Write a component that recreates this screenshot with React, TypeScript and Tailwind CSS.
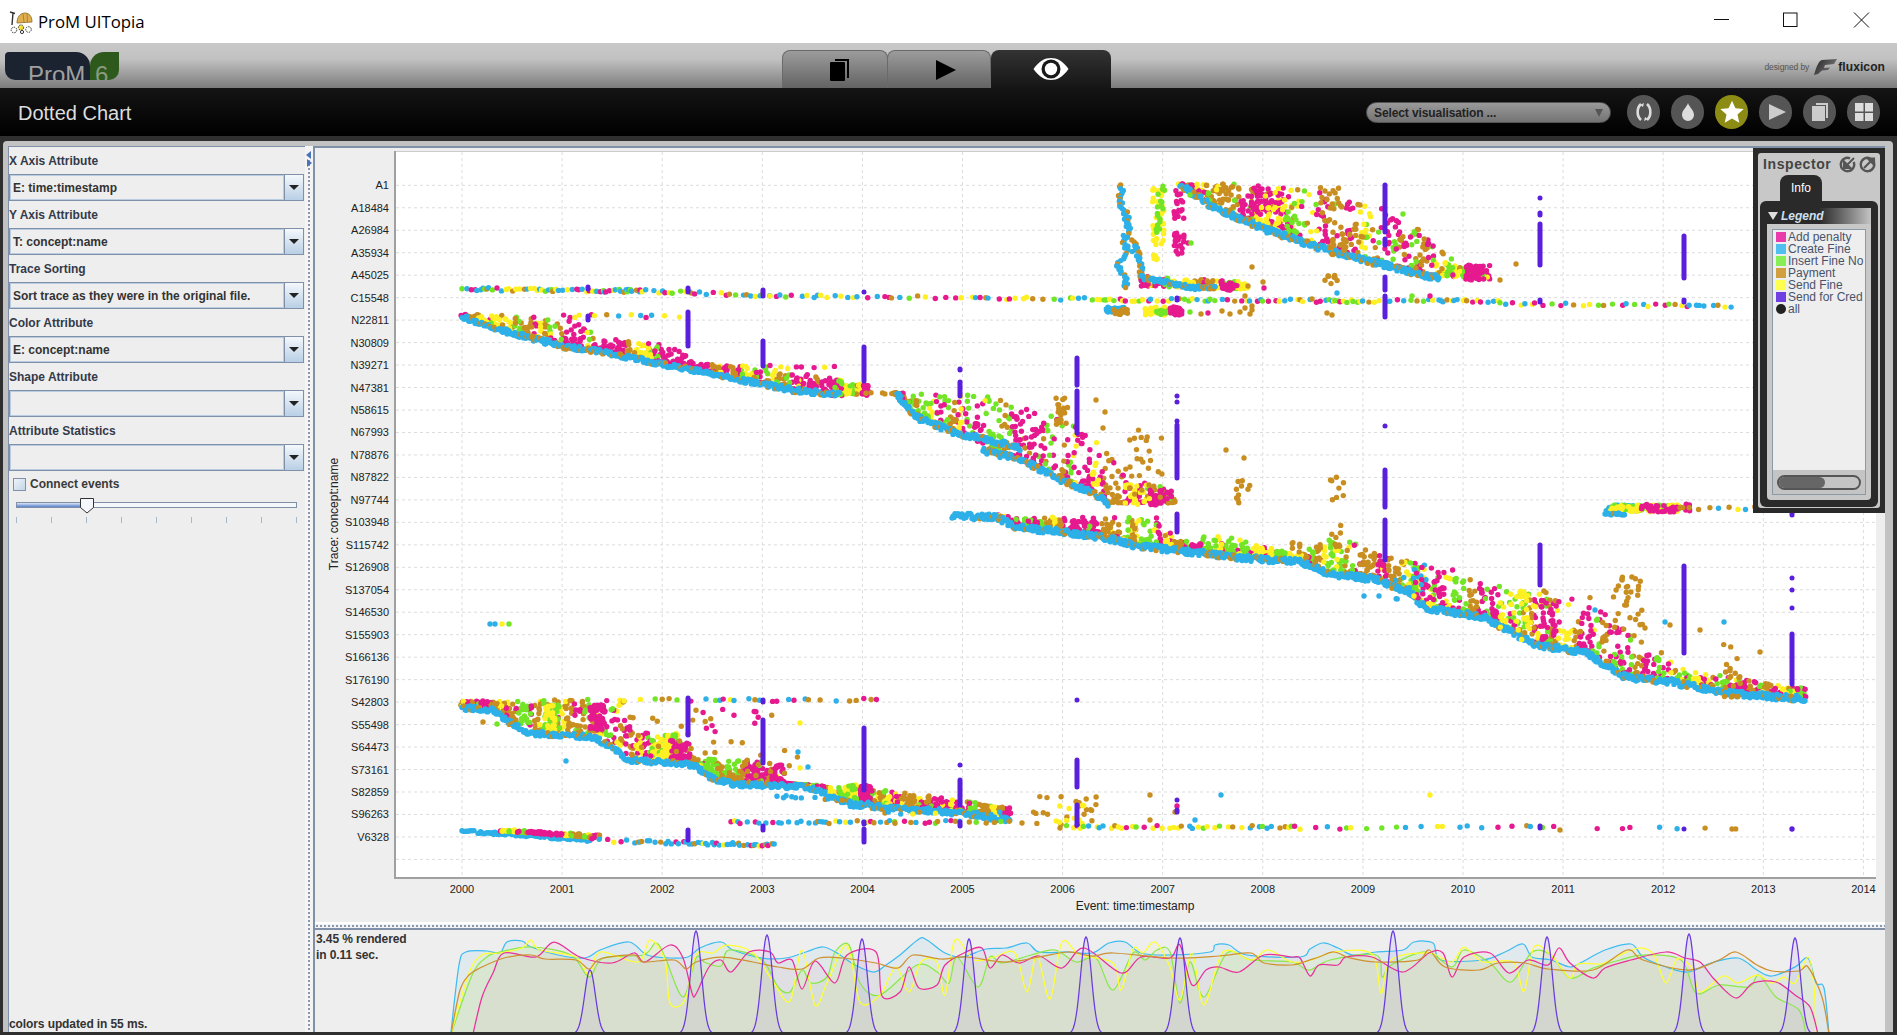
import React from "react";

type Pt = [number, number];
const P = "#e6198f", B = "#2db0e8", G = "#72e526", O = "#c98e20", Y = "#fff023", V = "#5a1fdd";

function mulberry(a: number) {
  return () => {
    a |= 0; a = (a + 0x6d2b79f5) | 0;
    let t = Math.imul(a ^ (a >>> 15), 1 | a);
    t = (t + Math.imul(t ^ (t >>> 7), 61 | t)) ^ t;
    return ((t ^ (t >>> 14)) >>> 0) / 4294967296;
  };
}
const rnd = mulberry(20131);
const rr = (a: number, b: number) => a + rnd() * (b - a);

function interp(poly: Pt[], x: number) {
  if (x <= poly[0][0]) return poly[0][1];
  for (let i = 1; i < poly.length; i++) {
    if (x <= poly[i][0]) {
      const [x0, y0] = poly[i - 1], [x1, y1] = poly[i];
      return y0 + ((y1 - y0) * (x - x0)) / Math.max(0.001, x1 - x0);
    }
  }
  return poly[poly.length - 1][1];
}

type D = { x: number; y: number; c: string };
const dots: D[] = [];
const add = (x: number, y: number, c: string) => dots.push({ x: Math.round(x * 10) / 10, y: Math.round(y * 10) / 10, c });
type W = [string, number][];
const MIX: W = [[P, 0.33], [G, 0.23], [Y, 0.22], [O, 0.22]];
const ROW: W = [[B, 0.34], [P, 0.18], [G, 0.18], [Y, 0.2], [O, 0.1]];
function pick(w: W) {
  let r = rnd();
  for (const [c, p] of w) { r -= p; if (r <= 0) return c; }
  return w[0][0];
}
function band(base: Pt[], top: Pt[], step = 1.6, w: W = MIX, pw = 1.9) {
  const out: D[] = [];
  let c = pick(w);
  for (let x = base[0][0]; x < base[base.length - 1][0]; x += step) {
    if (rnd() > 0.55) c = pick(w);
    const b = interp(base, x), t = interp(top, x), k = 1 + Math.floor(rnd() * 4);
    for (let i = 0; i < k; i++) out.push({ x: Math.round((x + rr(-1.5, 1.5)) * 10) / 10, y: Math.round((b - 2 - Math.pow(rnd(), pw) * Math.max(0, b - t - 2)) * 10) / 10, c });
  }
  for (let i = out.length - 1; i > 0; i--) {
    const j = Math.floor(rnd() * (i + 1));
    [out[i], out[j]] = [out[j], out[i]];
  }
  dots.push(...out);
}
function strand(poly: Pt[], step = 1.1, thick = 5, orange = 0.14, col = B) {
  for (let x = poly[0][0]; x < poly[poly.length - 1][0]; x += step) {
    add(x, interp(poly, x) + rr(-thick / 2, thick / 2), rnd() < orange ? O : col);
  }
}
function row(x0: number, y0: number, x1: number, y1: number, gap: number, w: W = ROW, j = 1.5) {
  let x = x0;
  while (x < x1) {
    add(x, y0 + ((y1 - y0) * (x - x0)) / (x1 - x0) + rr(-j, j), pick(w));
    x += rr(0.3, 1.7) * gap;
  }
}
function blob(x0: number, x1: number, y0: number, y1: number, n: number, c: string) {
  for (let i = 0; i < n; i++) add(rr(x0, x1), rr(y0, y1), c);
}

// C15548 rows
row(462, 289, 640, 291, 3); row(640, 291, 770, 296, 5); row(770, 296, 1100, 299, 7);
row(1100, 300, 1300, 300, 5); row(1300, 301, 1500, 301, 4.5); row(1500, 304, 1740, 306, 6);
// N22811 trunk
band([[462, 318], [490, 328], [527, 338], [567, 348], [607, 354], [667, 366], [693, 371], [757, 384], [793, 391], [840, 396], [868, 396]],
     [[462, 314], [570, 315], [600, 338], [670, 345], [700, 364], [760, 366], [868, 385]], 1.7);
row(575, 316, 690, 316, 9, [[B, 0.4], [P, 0.2], [Y, 0.2], [O, 0.2]]); row(770, 367, 840, 367, 8, [[P, 0.5], [Y, 0.2], [G, 0.2], [B, 0.1]]);
blob(862, 868, 385, 396, 30, P); blob(832, 842, 380, 396, 22, P); blob(832, 842, 380, 396, 10, G);
strand([[462, 317], [490, 327], [527, 337], [567, 347], [607, 353], [667, 365], [693, 370], [757, 383], [793, 390], [840, 395]]);
row(866, 393, 900, 392, 8, [[O, 1]]);
// N47381 - N97744
band([[895, 395], [915, 417], [956, 433], [1021, 462], [1062, 480], [1103, 498], [1109, 505], [1175, 505]],
     [[895, 393], [930, 393], [980, 395], [1021, 403], [1060, 412], [1100, 440], [1130, 480], [1175, 490]], 1.5);
strand([[897, 394], [915, 417], [956, 433], [1021, 448]], 1, 6);
strand([[983, 450], [1021, 460], [1062, 480], [1103, 498], [1109, 505]], 1, 6, 0.22);
blob(1150, 1172, 490, 505, 30, P); blob(1125, 1150, 485, 505, 16, Y);
blob(1056, 1068, 398, 430, 18, O); blob(1125, 1162, 430, 500, 26, O); blob(1236, 1250, 480, 503, 10, O); blob(1330, 1345, 475, 502, 8, O);
add(1226, 450, O); add(1244, 458, O); add(1096, 400, O); add(1105, 412, O); add(1103, 428, O);
// S103948 long band
const longBase: Pt[] = [[952, 516], [997, 517], [1015, 527], [1062, 532], [1103, 537], [1132, 545], [1173, 550], [1244, 558], [1302, 562], [1326, 573], [1379, 580], [1408, 593], [1426, 608], [1484, 617], [1520, 637], [1537, 645], [1584, 652], [1625, 677], [1672, 682], [1725, 693], [1806, 699]];
band(longBase.slice(1), [[997, 516], [1080, 517], [1156, 515], [1175, 540], [1220, 535], [1300, 555], [1337, 533], [1380, 555], [1426, 560], [1478, 580], [1555, 597], [1643, 637], [1684, 670], [1795, 688]], 1.5, MIX, 2.2);
strand(longBase, 1, 6, 0.12);
blob(1613, 1643, 575, 635, 30, O); blob(1720, 1742, 640, 700, 18, O); blob(1515, 1560, 590, 640, 10, O); blob(1580, 1610, 600, 640, 8, P); row(1550, 600, 1600, 596, 24, [[O, 0.6], [P, 0.4]]);
blob(1330, 1345, 525, 550, 8, O); blob(1290, 1300, 535, 555, 6, O); blob(1395, 1430, 565, 600, 16, B); blob(1415, 1440, 565, 600, 18, P); blob(1500, 1540, 590, 640, 34, Y); blob(1540, 1560, 600, 640, 26, P);
add(1595, 610, B); add(1364, 596, B); add(1379, 596, B); add(1414, 596, Y); add(1665, 622, B); add(1724, 622, B); add(1760, 652, O); add(1670, 625, O); add(1645, 628, O); add(1700, 630, O);
blob(1605, 1640, 505, 512, 60, B); blob(1610, 1680, 505, 511, 70, G); blob(1610, 1680, 505, 512, 50, Y); blob(1640, 1690, 504, 512, 35, P); row(1680, 509, 1790, 508, 8, [[O, 0.6], [B, 0.3], [Y, 0.1]]); strand([[1605, 514], [1625, 514]], 1.5, 2);
// A1 cluster
band([[1180, 186], [1213, 208], [1267, 231], [1333, 253], [1427, 277], [1490, 281]],
     [[1180, 184], [1240, 184], [1310, 190], [1340, 190], [1360, 200], [1400, 215], [1460, 265], [1490, 275]], 1.5, MIX, 1.7);
blob(1465, 1490, 265, 280, 45, P); blob(1240, 1285, 188, 215, 50, P); blob(1260, 1285, 190, 225, 20, Y); blob(1285, 1300, 200, 235, 16, G);
strand([[1180, 185], [1213, 207], [1267, 230], [1333, 252], [1427, 276], [1440, 277]], 1, 6, 0.16);
blob(1320, 1345, 185, 225, 14, O); blob(1340, 1370, 200, 255, 14, O); add(1360, 205, O); add(1420, 255, O); add(1416, 268, O); add(1500, 280, O); add(1516, 264, O); add(1403, 214, G);
for (let y = 185; y < 288; y += 1.8) add(interp([[185, 1122], [200, 1120], [215, 1126], [232, 1128], [242, 1122], [252, 1130], [265, 1118], [280, 1128], [288, 1125]], y) + rr(-3, 3), y, rnd() < 0.12 ? O : B);
for (let y = 240; y < 280; y += 2) add(interp([[240, 1133], [260, 1140], [280, 1142]], y) + rr(-2, 2), y, rnd() < 0.4 ? O : B);
blob(1152, 1164, 185, 245, 32, Y); blob(1156, 1166, 185, 235, 18, G); blob(1152, 1160, 255, 262, 5, Y);
blob(1174, 1184, 190, 220, 18, P); blob(1174, 1184, 232, 255, 18, P); add(1178, 254, P); add(1188, 243, P); add(1190, 195, G); add(1191, 243, G);
band([[1140, 288], [1250, 291]], [[1140, 276], [1250, 282]], 2.2);
strand([[1140, 277], [1165, 282], [1195, 288], [1215, 287]], 1.1, 4, 0.3);
blob(1222, 1238, 283, 291, 22, P);
add(1252, 267, O); add(1263, 282, O); add(1248, 286, O); add(1264, 288, P); blob(1322, 1340, 275, 290, 6, O); add(1334, 277, O); add(1337, 293, B);
blob(1106, 1125, 307, 312, 28, B); blob(1113, 1130, 309, 315, 18, O); blob(1145, 1165, 307, 315, 26, Y); blob(1155, 1170, 310, 315, 16, G); blob(1170, 1182, 307, 315, 28, P); add(1190, 312, G);
add(1201, 314, O); add(1208, 313, P); add(1222, 311, O); add(1250, 314, O); add(1245, 308, O); add(1240, 312, O); add(1252, 306, O); add(1230, 314, O); add(1252, 310, O);
add(1327, 313, O); add(1332, 315, O); add(1328, 276, O); add(1312, 299, O); add(1412, 296, G); add(1430, 296, P); add(1245, 296, O);
// S42803 group
band([[462, 708], [494, 710], [509, 722], [528, 733], [559, 735], [593, 737], [612, 747], [628, 760], [674, 763], [693, 765], [712, 778], [731, 784], [769, 785], [807, 787], [827, 795], [853, 805], [884, 807], [1010, 818]],
     [[462, 701], [624, 699], [628, 725], [640, 733], [677, 733], [693, 758], [769, 762], [781, 783], [838, 787], [861, 787], [907, 792], [1010, 808]], 1.4, MIX, 1.4);
blob(545, 560, 705, 735, 34, G); blob(545, 555, 705, 735, 24, Y); blob(590, 605, 705, 730, 60, P); blob(665, 680, 735, 760, 34, G); blob(660, 672, 735, 760, 24, Y); blob(670, 690, 740, 760, 46, P); blob(770, 785, 765, 785, 30, P); blob(725, 760, 760, 785, 24, O); blob(860, 872, 785, 805, 50, P); blob(845, 857, 785, 802, 24, Y); blob(845, 857, 785, 802, 14, G);
strand([[462, 708], [494, 710], [509, 722], [528, 733], [559, 735], [593, 737], [612, 747], [628, 760], [674, 763], [693, 765], [712, 778], [731, 784], [769, 785], [807, 787], [827, 795], [853, 805], [884, 807], [950, 812], [1010, 820]], 1.1, 5, 0.1);
row(624, 700, 880, 700, 10, [[B, 0.3], [P, 0.25], [Y, 0.15], [O, 0.2], [G, 0.1]]);
blob(620, 720, 715, 760, 16, O); blob(690, 800, 700, 775, 14, O); blob(700, 760, 705, 745, 10, P);
add(483, 722, O); add(497, 724, G); add(566, 761, B); add(800, 723, Y); add(800, 768, Y); add(798, 752, B); add(808, 767, B); add(1430, 795, Y);
row(777, 797, 805, 797, 5, [[B, 1]]); row(815, 798, 870, 802, 7, [[B, 0.8], [O, 0.2]]); row(885, 813, 1010, 813, 9, [[B, 0.7], [O, 0.2], [Y, 0.1]]);
row(731, 822, 895, 822, 5, [[B, 0.55], [P, 0.15], [O, 0.15], [Y, 0.1], [G, 0.05]]); row(895, 822, 1010, 822, 6, [[O, 0.4], [B, 0.2], [P, 0.2], [G, 0.2]]);
blob(1030, 1100, 795, 830, 22, O); blob(1055, 1085, 805, 825, 10, Y); add(1022, 823, O); add(1150, 795, O); add(1177, 806, P); add(1221, 795, B); add(1150, 820, O); add(1195, 820, B); add(1175, 812, O);
// V6328
strand([[462, 831], [475, 831]], 2, 1, 0); strand([[478, 833], [500, 833], [560, 838], [590, 840]], 1.3, 3, 0);
band([[500, 833], [600, 840]], [[500, 829], [600, 835]], 2.2);
row(592, 840, 640, 842, 5, [[B, 0.55], [P, 0.2], [O, 0.15], [Y, 0.1]]); row(640, 842, 690, 843, 3.5, [[B, 0.7], [P, 0.15], [O, 0.15]]);
row(692, 843, 775, 845, 2.8, [[B, 0.6], [Y, 0.15], [O, 0.15], [P, 0.1]]);
row(1060, 827, 1300, 827, 5.5); row(1300, 828, 1560, 827, 11, ROW); row(1560, 829, 1740, 828, 22, [[P, 0.5], [B, 0.2], [O, 0.3]]);
add(1792, 829, V); add(1732, 829, O);
add(490, 624, B); add(495, 624, B); add(502, 624, Y); add(509, 624, G);

const vlines: [number, number, number][] = [
  [1385, 185, 232], [1385, 239, 245], [1385, 277, 290], [1385, 296, 317], [1385, 426, 426], [1385, 470, 507], [1385, 520, 560],
  [1540, 198, 198], [1540, 213, 215], [1540, 224, 265], [1540, 300, 302], [1540, 545, 585],
  [1684, 236, 278], [1684, 300, 302], [1684, 566, 653], [1792, 578, 578], [1792, 590, 590], [1792, 608, 608], [1792, 634, 684], [1792, 505, 515],
  [1177, 396, 396], [1177, 402, 402], [1177, 421, 421], [1177, 425, 478], [1177, 514, 532], [1177, 298, 300], [1177, 800, 800], [1177, 810, 812],
  [1077, 358, 385], [1077, 391, 433], [1077, 700, 700], [1077, 760, 787], [1077, 805, 825],
  [960, 369, 370], [960, 382, 396], [960, 765, 765], [960, 780, 805], [960, 822, 826],
  [864, 292, 292], [864, 347, 381], [864, 728, 790], [864, 829, 842], [864, 822, 824],
  [763, 290, 296], [763, 341, 366], [763, 700, 702], [763, 720, 763], [763, 826, 830],
  [688, 288, 292], [688, 312, 346], [688, 698, 735], [688, 830, 840], [588, 287, 289], [588, 316, 320], [1540, 826, 828], [1684, 829, 829],
];

const plotDots = dots;

const series: { c: string; a: number; p: number[] }[] = [
  { c: "#3dbcf0", a: 0.08, p: [451,1032,459,965,466,952,487,951,500,953,507,942,522,941,531,947,558,955,585,958,600,950,629,942,647,955,670,958,688,957,700,948,721,942,733,950,762,958,786,958,806,952,823,947,837,953,855,965,874,972,886,965,900,955,919,939,927,940,945,953,962,957,986,949,1006,948,1027,943,1039,952,1068,952,1092,953,1109,943,1125,942,1141,953,1170,955,1210,952,1215,945,1229,945,1247,955,1300,957,1310,949,1323,943,1338,948,1353,955,1376,952,1403,950,1414,942,1433,943,1441,960,1483,960,1505,952,1523,944,1532,957,1551,960,1570,967,1582,962,1605,950,1631,944,1643,957,1666,967,1688,972,1711,963,1738,958,1757,970,1772,976,1795,967,1808,958,1816,983,1824,988,1829,1034] },
  { c: "#8ae84a", a: 0.08, p: [451,1034,473,973,487,957,496,953,531,947,571,955,589,977,603,958,643,955,656,943,665,957,683,997,696,958,704,962,721,966,729,950,762,960,778,987,790,992,802,970,811,983,827,977,835,952,849,945,860,983,880,995,917,965,937,972,949,983,957,957,978,987,990,957,1002,963,1031,955,1055,950,1076,962,1096,958,1113,990,1133,953,1145,960,1157,950,1170,952,1180,1003,1190,962,1204,997,1227,953,1251,960,1292,962,1309,970,1330,960,1376,955,1382,977,1391,965,1426,952,1452,967,1464,950,1490,963,1511,982,1532,952,1551,955,1570,978,1593,968,1620,960,1643,955,1681,960,1696,993,1719,985,1749,987,1759,975,1776,997,1799,1010,1806,1034] },
  { c: "#ffff30", a: 0.05, p: [451,1034,469,973,482,955,500,953,522,948,531,940,540,950,576,957,589,975,600,952,638,962,650,940,665,960,670,1003,685,1000,696,955,713,953,727,945,753,953,774,983,790,1001,802,950,815,1005,827,983,847,945,860,1002,880,995,896,967,909,992,921,962,937,962,945,995,955,940,974,960,994,957,1015,953,1027,992,1037,955,1050,999,1062,942,1080,955,1113,963,1121,990,1133,949,1143,953,1155,942,1170,967,1180,1000,1192,953,1204,1005,1223,952,1251,960,1268,950,1292,962,1311,960,1334,952,1372,954,1381,993,1391,960,1429,953,1452,962,1464,947,1483,962,1513,962,1524,991,1534,947,1551,955,1570,978,1578,964,1601,964,1616,957,1639,948,1654,955,1666,983,1677,959,1692,968,1700,992,1723,976,1738,983,1757,975,1772,983,1784,977,1795,983,1808,957,1814,987,1816,1034] },
  { c: "#e8309a", a: 0.04, p: [473,1034,482,997,493,973,504,953,536,957,554,942,580,957,612,963,634,953,645,962,670,945,683,958,692,993,696,994,709,967,721,960,731,972,749,952,770,952,778,963,792,960,802,989,815,961,835,983,847,955,876,952,882,996,900,992,909,967,919,988,937,985,945,965,966,952,982,948,990,968,1002,955,1019,963,1039,956,1062,968,1084,948,1121,973,1141,957,1170,958,1180,945,1192,985,1206,970,1219,967,1239,972,1264,955,1292,957,1300,958,1310,976,1319,965,1338,965,1346,957,1372,957,1403,972,1429,953,1443,953,1452,977,1464,957,1490,953,1509,973,1528,960,1548,965,1559,948,1570,963,1593,978,1605,968,1631,960,1666,952,1685,958,1700,962,1715,980,1736,998,1753,983,1776,982,1795,995,1810,1007,1818,1034] },
  { c: "#cf9030", a: 0.03, p: [451,1034,460,990,469,975,480,968,504,958,531,955,545,959,576,960,589,969,600,959,634,955,643,962,674,960,686,969,696,962,721,957,753,962,778,967,802,969,819,958,843,958,876,963,898,968,913,955,941,959,966,957,1006,962,1039,957,1068,952,1092,956,1113,953,1170,958,1219,956,1251,953,1264,963,1292,965,1304,962,1319,957,1334,952,1350,958,1376,962,1418,960,1429,950,1445,967,1479,970,1498,963,1525,963,1548,969,1593,970,1627,950,1643,960,1688,970,1719,960,1736,952,1757,965,1772,971,1799,971,1808,967,1822,997,1829,1034] },
];

function smooth(p: number[]) {
  const pts: Pt[] = [];
  for (let i = 0; i < p.length; i += 2) pts.push([p[i], p[i + 1]]);
  let d = `M${pts[0][0]} ${pts[0][1]}`;
  for (let i = 0; i < pts.length - 1; i++) {
    const a = pts[Math.max(0, i - 1)], b = pts[i], c = pts[i + 1], e = pts[Math.min(pts.length - 1, i + 2)];
    const t = 0.16;
    d += `C${(b[0] + (c[0] - a[0]) * t).toFixed(1)} ${(b[1] + (c[1] - a[1]) * t).toFixed(1)} ${(c[0] - (e[0] - b[0]) * t).toFixed(1)} ${(c[1] - (e[1] - b[1]) * t).toFixed(1)} ${c[0]} ${c[1]}`;
  }
  return d;
}
const peaks: Pt[] = [[590, 970], [696, 931], [767, 935], [862, 939], [969, 939], [1086, 937], [1180, 938], [1393, 931], [1547, 937], [1689, 934], [1795, 938]];
function purplePath() {
  let d = "M440 1034";
  for (let x = 440; x <= 1835; x += 1) {
    let h = 0;
    for (const [c, t] of peaks) h += (1034 - t) * Math.exp(-((x - c) * (x - c)) / (2 * 5.4 * 5.4));
    d += `L${x} ${(1034 - h).toFixed(1)}`;
  }
  return d + "L1835 1034";
}

const yLabels = ["A1","A18484","A26984","A35934","A45025","C15548","N22811","N30809","N39271","N47381","N58615","N67993","N78876","N87822","N97744","S103948","S115742","S126908","S137054","S146530","S155903","S166136","S176190","S42803","S55498","S64473","S73161","S82859","S96263","V6328"];

function Plot() {
  const ys = Array.from({ length: 31 }, (_, i) => 185.3 + i * 22.47);
  const xs = Array.from({ length: 15 }, (_, i) => 462 + i * 100.1);
  return (
    <svg width={1570} height={774} viewBox="315 148 1570 774" className="block">
      <rect x={395} y={151} width={1481} height={727} fill="#fff" />
      <line x1={395} x2={1876} y1={151.5} y2={151.5} stroke="#ccc" />
      {xs.map((x) => <line key={x} x1={x} x2={x} y1={152} y2={877} stroke="#dcdcdc" strokeDasharray="3 3" />)}
      {ys.map((y) => <line key={y} x1={396} x2={1876} y1={y} y2={y} stroke="#dcdcdc" strokeDasharray="3 3" />)}
      {plotDots.map((d, i) => <circle key={i} cx={d.x} cy={d.y} r={2.7} fill={d.c} />)}
      {vlines.map(([x, a, b], i) => <line key={i} x1={x} x2={x} y1={a} y2={b + 0.01} stroke={V} strokeWidth={5} strokeLinecap="round" />)}
      <line x1={395} x2={395} y1={151} y2={879} stroke="#a0a0a0" strokeWidth={2} />
      <line x1={394} x2={1876} y1={878} y2={878} stroke="#a0a0a0" strokeWidth={2} />
      <g fontFamily="'Liberation Sans', Arial, sans-serif" fontSize={11} fill="#222">
        {yLabels.map((l, i) => <text key={l} x={389} y={ys[i] + 4} textAnchor="end">{l}</text>)}
        {xs.map((x, i) => <text key={x} x={x} y={893} textAnchor="middle">{2000 + i}</text>)}
        <text x={1135} y={910} textAnchor="middle" fontSize={12}>Event: time:timestamp</text>
        <text transform="translate(338 514) rotate(-90)" textAnchor="middle" fontSize={12}>Trace: concept:name</text>
      </g>
    </svg>
  );
}

function Mini() {
  return (
    <svg width={1570} height={102} viewBox="315 930 1570 102" className="absolute left-0 top-0">
      <path d={purplePath()} fill="#6a3ae0" fillOpacity={0.07} />
      {series.map((s) => <path key={s.c} d={smooth(s.p) + "Z"} fill={s.c} fillOpacity={s.a} />)}
      {series.map((s) => <path key={s.c} d={smooth(s.p)} fill="none" stroke={s.c} strokeWidth={1.25} />)}
      <path d={purplePath()} fill="none" stroke="#6a3ae0" strokeWidth={1.25} />
    </svg>
  );
}

function Combo({ label, value }: { label: string; value?: string }) {
  return (
    <div>
      <div className="h-[27px] flex items-center text-[12px] font-bold text-[#333a4a]">{label}</div>
      <div className="h-[27px] mr-[1px] flex border border-[#7f90a8]">
        <div className="flex-1 flex items-center pl-[2px] text-[12px] font-bold text-[#333] bg-[#eeeeee] border border-[#b8cde2]">{value}</div>
        <div className="w-[19px] flex items-center justify-center border-l border-[#7f90a8] bg-gradient-to-b from-[#f4f8fc] to-[#b9cfe5]">
          <div className="w-0 h-0 border-l-[5px] border-r-[5px] border-t-[5px] border-l-transparent border-r-transparent border-t-[#222]" />
        </div>
      </div>
    </div>
  );
}

function Circle({ bg = "bg-[#555555]", children }: { bg?: string; children: React.ReactNode }) {
  return <div className={`w-[33px] h-[34px] rounded-full flex items-center justify-center ${bg}`}>{children}</div>;
}

const legend: [string, string][] = [["Add penalty", "#e83caa"], ["Create Fine", "#4fbff0"], ["Insert Fine No", "#88ee55"], ["Payment", "#d0a040"], ["Send Fine", "#ffff50"], ["Send for Cred", "#7040e0"]];

function InspIcon({ out }: { out?: boolean }) {
  return (
    <svg width={17} height={17} viewBox="0 0 17 17">
      <path d="M11 2.300A6.700 6.700 0 1 0 14.700 6" fill="none" stroke="#555" strokeWidth={2.4} />
      {out
        ? <path d="M5 12 13 4M9 2.500h6v6Z" fill="#555" stroke="#555" strokeWidth={2.2} />
        : <path d="M15 2 8.500 8.500M5 5.500V12h6.500Z" fill="#555" stroke="#555" strokeWidth={2} />}
    </svg>
  );
}

function Inspector() {
  return (
    <div className="absolute right-0 top-0 w-[132px] h-[365px] bg-[#2a2a2a] p-[5px] pr-[5px]">
      <div className="h-[355px] bg-[#c8c8c8] rounded-[3px] flex flex-col">
        <div className="h-[22px] shrink-0 flex items-center pl-[5px] pt-[1px] gap-[3px]">
          <span className="text-[14px] font-bold tracking-[0.6px] text-[#444] w-[73px]">Inspector</span>
          <InspIcon /><InspIcon out />
        </div>
        <div className="h-[26px] shrink-0 ml-[22px] w-[42px] bg-[#2a2a2a] rounded-t-[8px] flex items-center justify-center text-[12px] text-white">Info</div>
        <div className="w-[118px] h-[306px] ml-[2px] bg-[#2a2a2a] rounded-[6px] p-[7px] flex flex-col">
          <div className="h-[16px] shrink-0 flex items-center gap-[3px] pl-[1px] bg-gradient-to-r from-[#2a2a2a] via-[#2a2a2a] to-[#c4c4c4] ">
            <div className="w-0 h-0 border-l-[5px] border-r-[5px] border-t-[8px] border-l-transparent border-r-transparent border-t-[#ddd]" />
            <span className="text-[12px] font-bold italic text-[#cfe0f0]">Legend</span>
          </div>
          <div className="flex-1 w-[104px] bg-[#c8c8c8] rounded-b-[4px] p-[5px] pb-[5px]">
            <div className="h-full border border-[#8a9aa8] bg-[#eeeeee] flex flex-col overflow-hidden">
              <div className="flex-1 pt-[1px] pl-[3px]">
                {legend.map(([t, c]) => (
                  <div key={t} className="h-[12px] flex items-center gap-[2px] text-[12px] leading-[12px] text-[#48536b] whitespace-nowrap">
                    <span className="w-[10px] h-[10px] shrink-0" style={{ backgroundColor: c }} />
                    <span>{t}</span>
                  </div>
                ))}
                <div className="h-[12px] flex items-center gap-[2px] text-[12px] leading-[12px] text-[#48536b]">
                  <span className="w-[10px] h-[10px] rounded-full bg-[#222] shrink-0" /><span>all</span>
                </div>
              </div>
              <div className="h-[24px] shrink-0 bg-[#c4c4c4] flex items-center px-[4px]">
                <div className="w-[85px] h-[15px] rounded-full border-2 border-[#555] overflow-hidden">
                  <div className="w-[46px] h-full bg-[#666] rounded-r-full" />
                </div>
              </div>
            </div>
          </div>
        </div>
      </div>
    </div>
  );
}

export default function App() {
  return (
    <div className="w-[1897px] h-[1035px] flex flex-col overflow-hidden bg-[#1f2d36] font-['Liberation_Sans',Arial,sans-serif]">
      {/* Title bar */}
      <div className="h-[43px] shrink-0 bg-white flex items-center">
        <svg width={24} height={24} viewBox="0 0 24 24" className="ml-[9px] mr-[5px]">
          <path d="M8 13C8 6 12 3 16 3s7 3 7 9l-15 1Z" fill="#e0b050" stroke="#8a6a20" strokeWidth={0.8} />
          <path d="M14 3.500 15 12M18 3.500 18.500 12" stroke="#a07a28" strokeWidth={0.8} />
          <path d="M1 2 6 3.500M4 3 3 15" stroke="#333" strokeWidth={1.4} fill="none" />
          <circle cx={5} cy={20} r={2.8} fill="#fff" stroke="#333" strokeDasharray="1.5 1" />
          <circle cx={12} cy={17.5} r={2.6} fill="#f2e23a" stroke="#333" strokeDasharray="1.5 1" />
          <circle cx={13} cy={22} r={1.6} fill="#fff" stroke="#333" />
          <circle cx={19.5} cy={19.5} r={2.8} fill="#fff" stroke="#333" strokeDasharray="1.5 1" />
        </svg>
        <span className="text-[16.8px] text-black font-['Open_Sans',sans-serif]">ProM UITopia</span>
        <div className="ml-auto flex items-center">
          <svg width={183} height={16} viewBox="0 0 183 16" className="mt-[-3px]">
            <line x1={0} x2={15} y1={7.5} y2={7.5} stroke="#111" strokeWidth={1} />
            <rect x={69.5} y={1} width={13.5} height={13.5} fill="none" stroke="#111" />
            <path d="M140 0.500 155 15.500M155 0.500 140 15.500" stroke="#111" strokeWidth={1} fill="none" />
          </svg>
        </div>
      </div>
      {/* Gray toolbar */}
      <div className="h-[45px] shrink-0 flex bg-[linear-gradient(#c8c8c8_0%,#c2c2c2_35%,#7c7c7c_100%)]">
        <div className="ml-[5px] mt-[9px] w-[114px] h-[28px] flex">
          <div className="w-[85px] h-full bg-[#1b2331] rounded-tr-[14px] rounded-bl-[10px] rounded-tl-[4px] overflow-hidden pl-[23px] pt-[10px] text-[24px] leading-[26px] text-[#a0a0a0]">ProM</div>
          <div className="w-[29px] h-full bg-[#2d5a1c] rounded-tl-[14px] rounded-br-[10px] overflow-hidden pl-[5px] pt-[10px] text-[24px] leading-[26px] text-[#8a9a80]">6</div>
        </div>
        <div className="ml-[663px] mt-[7px] h-[38px] flex">
          <div className="w-[106px] rounded-t-[8px] border border-b-0 border-[#6a6a6a] bg-[linear-gradient(#9c9c9c,#636363)] flex items-center justify-center">
            <svg width={22} height={24} viewBox="0 0 22 24" className="ml-[9px]"><path d="M6 1h14v19h-2V3H6Z" fill="#000" /><rect x={1} y={4} width={15} height={19} rx={1} fill="#000" /></svg>
          </div>
          <div className="w-[104px] -ml-[1px] rounded-t-[8px] border border-b-0 border-[#6a6a6a] bg-[linear-gradient(#9c9c9c,#636363)] flex items-center justify-center">
            <svg width={22} height={22} viewBox="0 0 22 22" className="ml-[13px]"><path d="M1 1 21 11 1 21Z" fill="#000" /></svg>
          </div>
          <div className="w-[120px] rounded-t-[8px] bg-[linear-gradient(#333333,#151515)] flex items-center justify-center pr-[1px]">
            <svg width={36} height={24} viewBox="0 0 36 24">
              <path d="M0.500 12C6 4 12 1 18 1s12 3 17.500 11C30 20 24 23 18 23S6 20 0.500 12Z" fill="#fff" />
              <circle cx={18} cy={12} r={9.5} fill="#1a1a1a" /><circle cx={18} cy={12} r={6.2} fill="#fff" />
            </svg>
          </div>
        </div>
        <div className="ml-auto mr-[12px] mt-[16px] h-[16px] flex items-center">
          <span className="text-[8.5px] text-[#555] mr-[4px] tracking-[-0.1px]">designed by</span>
          <svg width={24} height={16} viewBox="0 0 24 16" className="mr-[1px]">
            <defs><linearGradient id="fx" x1="0" x2="1" y1="0" y2="0.5"><stop offset="0" stopColor="#222" /><stop offset="1" stopColor="#777" /></linearGradient></defs>
            <path d="M1 16C4 6 6 2 9 1L24 0 21 5 12 6 11 9 17 8.500 15 11 9 11.500 5 15Z" fill="url(#fx)" />
          </svg>
          <span className="text-[12px] font-bold text-[#222] tracking-[0.1px]">fluxicon</span>
        </div>
      </div>
      {/* Black bar */}
      <div className="h-[48px] shrink-0 flex items-center bg-[linear-gradient(#141414,#000000)]">
        <div className="pl-[18px] pt-[1px] text-[20px] text-[#dddddd]">Dotted Chart</div>
        <div className="ml-auto w-[245px] h-[21px] rounded-full border border-[#555] bg-[linear-gradient(#9a9a9a,#737373)] flex items-center justify-between pl-[7px] pr-[7px] mr-[16px] text-[12px] font-bold text-[#222] tracking-[-0.1px] mt-[1px]">
          <span>Select visualisation ...</span>
          <div className="w-0 h-0 border-l-[4px] border-r-[4px] border-t-[8px] border-l-transparent border-r-transparent border-t-[#555]" />
        </div>
        <div className="flex gap-[11px] mr-[17px] -mt-[1px]">
          <Circle><svg width={20} height={20} viewBox="0 0 20 20"><path d="M7 2C2.500 6 2.500 14 7 18M13 2c4.500 4 4.500 12 0 16" fill="none" stroke="#ddd" strokeWidth={2.6} /><path d="M10 1 6 3l3 2ZM10 19l4-2-3-2Z" fill="#ddd" /></svg></Circle>
          <Circle><svg width={16} height={20} viewBox="0 0 16 20"><path d="M8 1c1 4 6 7 6 12a6 6 0 0 1-12 0C2 8 7 5 8 1Z" fill="#ddd" /></svg></Circle>
          <Circle bg="bg-[#8c8c14]"><svg width={26} height={26} viewBox="0 0 24 24"><path d="M12 1.500l3.200 7 7.600.8-5.700 5.100 1.600 7.500L12 18.100 5.300 21.900l1.600-7.500L1.200 9.300l7.600-.8Z" fill="#fff" /></svg></Circle>
          <Circle><svg width={20} height={20} viewBox="0 0 20 20" className="ml-[3px]"><path d="M2 2 19 10 2 18Z" fill="#ccc" /></svg></Circle>
          <Circle><svg width={20} height={20} viewBox="0 0 20 20"><path d="M6 1h12v15h-2V3H6Z" fill="#ccc" /><rect x={2} y={4} width={13} height={15} fill="#ccc" /></svg></Circle>
          <Circle><svg width={20} height={20} viewBox="0 0 20 20"><rect x={1} y={1} width={8.500} height={8.500} fill="#ddd" /><rect x={11} y={1} width={8} height={8.500} fill="#ddd" /><rect x={1} y={11} width={8.500} height={8} fill="#ddd" /><rect x={11} y={11} width={8} height={8} fill="#ddd" /></svg></Circle>
        </div>
      </div>
      {/* Body */}
      <div className="h-[899px] shrink-0 bg-[#2f2f2f] pt-[5px] pl-[3px] pr-[4px] pb-[3px]">
        <div className="h-[891px] bg-[#c2c2c2] rounded-t-[4px] pt-[5px] pl-[5px] pr-[5px] flex">
          {/* Left panel */}
          <div className="w-[297px] shrink-0 bg-[#eeeeee] border-l border-t border-[#8090a8] flex flex-col text-[#333]">
            <div>
              <Combo label="X Axis Attribute" value="E: time:timestamp" />
              <Combo label="Y Axis Attribute" value="T: concept:name" />
              <Combo label="Trace Sorting" value="Sort trace as they were in the original file." />
              <Combo label="Color Attribute" value="E: concept:name" />
              <Combo label="Shape Attribute" />
              <Combo label="Attribute Statistics" />
            </div>
            <div className="h-[14px] mt-[6px] ml-[4px] flex items-center gap-[4px] text-[12px] font-bold text-[#3a3a3a]">
              <div className="w-[13px] h-[13px] border border-[#7f90a8] bg-gradient-to-br from-[#eef3f8] to-[#c3d6e8]" />
              <span>Connect events</span>
            </div>
            <div className="ml-[7px] w-[281px] mt-[11px] relative">
              <div className="h-[6px] border border-[#7f90a8] bg-[#f4f7fa]">
                <div className="w-[68px] h-full bg-gradient-to-b from-[#dbe6f4] to-[#5a80cc]" />
              </div>
              <svg width={16} height={17} viewBox="0 0 16 17" className="absolute left-[63px] -top-[5px]">
                <path d="M1.500 1.500h13v9L8 16 1.500 10.500Z" fill="#f4f8fc" stroke="#333" />
              </svg>
              <div className="flex justify-between mt-[9px]">
                {Array.from({ length: 9 }).map((_, i) => <div key={i} className="w-[1px] h-[6px] bg-[#a6b6cc]" />)}
              </div>
            </div>
            <div className="mt-auto text-[12px] font-bold text-[#333] leading-[15px] tracking-[-0.1px]">colors updated in 55 ms.</div>
          </div>
          {/* Divider */}
          <div className="w-[8px] shrink-0 bg-[#f4f4f4] flex flex-col items-center relative">
            <div className="w-[4px] h-full mt-[13px] bg-[radial-gradient(#8a98ad_0.8px,transparent_1px)] bg-[length:4px_4px]" />
            <div className="absolute top-[5px] left-[1px] w-0 h-0 border-y-[4px] border-r-[5px] border-y-transparent border-r-[#4a74b8]" />
            <div className="absolute top-[13px] left-[2px] w-0 h-0 border-y-[4px] border-l-[5px] border-y-transparent border-l-[#4a74b8]" />
          </div>
          {/* Main */}
          <div className="w-[1572px] shrink-0 relative flex flex-col bg-[#eeeeee] border-l-2 border-t-2 border-[#7f90a8]">
            <Plot />
            <div className="h-[8px] shrink-0 border-t-2 border-white border-b-2 border-b-[#7f90a8] bg-[radial-gradient(#8a98ad_0.8px,transparent_1px)] bg-[length:4px_4px] bg-[#f2f2f2]" />
            <div className="relative h-[102px] shrink-0 overflow-hidden">
              <Mini />
              <div className="relative pl-[1px] pt-[1px] text-[12px] leading-[16px] font-bold text-[#333] tracking-[-0.1px]">3.45 % rendered<br />in 0.11 sec.</div>
            </div>
            <Inspector />
          </div>
        </div>
      </div>
    </div>
  );
}
